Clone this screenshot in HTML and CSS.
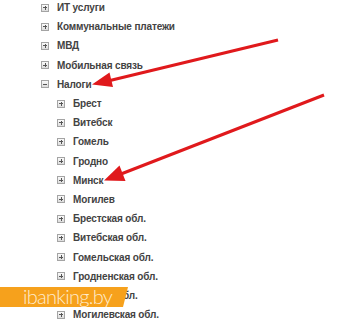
FILE: index.html
```html
<!DOCTYPE html>
<html>
<head>
	<meta charset="UTF-8">
	<title>Платежи</title>
	<link rel="stylesheet" href="styles.css">
</head>
<body>
	<div id="page">
		<ul class="tree">
			<li><span class="toggle"></span>ИТ услуги</li>
			<li><span class="toggle"></span>Коммунальные платежи</li>
			<li><span class="toggle"></span>МВД</li>
			<li><span class="toggle"></span>Мобильная связь</li>
			<li><span class="toggle minus"></span>Налоги</li>
			<li class="sub"><span class="toggle"></span>Брест</li>
			<li class="sub"><span class="toggle"></span>Витебск</li>
			<li class="sub"><span class="toggle"></span>Гомель</li>
			<li class="sub"><span class="toggle"></span>Гродно</li>
			<li class="sub"><span class="toggle"></span>Минск</li>
			<li class="sub"><span class="toggle"></span>Могилев</li>
			<li class="sub"><span class="toggle"></span>Брестская обл.</li>
			<li class="sub"><span class="toggle"></span>Витебская обл.</li>
			<li class="sub"><span class="toggle"></span>Гомельская обл.</li>
			<li class="sub"><span class="toggle"></span>Гродненская обл.</li>
			<li class="sub"><span class="toggle"></span>Минская обл.</li>
			<li class="sub"><span class="toggle"></span>Могилевская обл.</li>
		</ul>

		<div class="badge">ibanking.by</div>

		<svg class="arrows" width="338" height="320" viewBox="0 0 338 320">
			<line x1="278" y1="40" x2="110" y2="80.5" />
			<polygon points="92,84.5 113,87 109.5,72.5" />
			<line x1="324" y1="95" x2="121" y2="174" />
			<polygon points="104,180.5 125.5,181 119.5,165.5" />
		</svg>
	</div>
</body>
</html>
```

FILE: styles.css
```css
body {
	margin: 0;
	padding: 0;
	background: #fff;
	font-family: "Liberation Sans", Arial, sans-serif;
}

#page {
	position: relative;
	width: 338px;
	height: 320px;
	overflow: hidden;
}

.tree {
	list-style: none;
	margin: -2px 0 0 0;
	padding: 0 0 0 41px;
}

.tree li {
	display: flex;
	align-items: center;
	height: 19.2px;
	font-size: 10px;
	font-weight: bold;
	letter-spacing: -0.15px;
	color: #434343;
	white-space: nowrap;
}

.tree li.sub {
	padding-left: 16px;
}

.toggle {
	position: relative;
	flex: none;
	width: 6px;
	height: 6px;
	margin-right: 8px;
	border: 1px solid #a4a4a4;
	background: linear-gradient(#fafafa, #dcdcdc);
}

.toggle::before,
.toggle::after {
	content: "";
	position: absolute;
	background: #555;
}

.toggle::before {
	left: 1px;
	top: 2.5px;
	width: 4px;
	height: 1px;
}

.toggle::after {
	left: 2.5px;
	top: 1px;
	width: 1px;
	height: 4px;
}

.toggle.minus::after {
	display: none;
}

.badge {
	position: absolute;
	left: 0;
	top: 287px;
	width: 105px;
	height: 20px;
	padding-left: 23px;
	background: #f6a11c;
	clip-path: polygon(0 0, 128px 0, 123px 100%, 0 100%);
	color: #ffecce;
	font-family: Lato, "Open Sans", sans-serif;
	font-weight: 300;
	font-size: 20px;
	line-height: 18px;
	letter-spacing: -0.7px;
}

.arrows {
	position: absolute;
	left: 0;
	top: 0;
}

.arrows line {
	stroke: #e0191c;
	stroke-width: 3;
}

.arrows polygon {
	fill: #e0191c;
}
```
